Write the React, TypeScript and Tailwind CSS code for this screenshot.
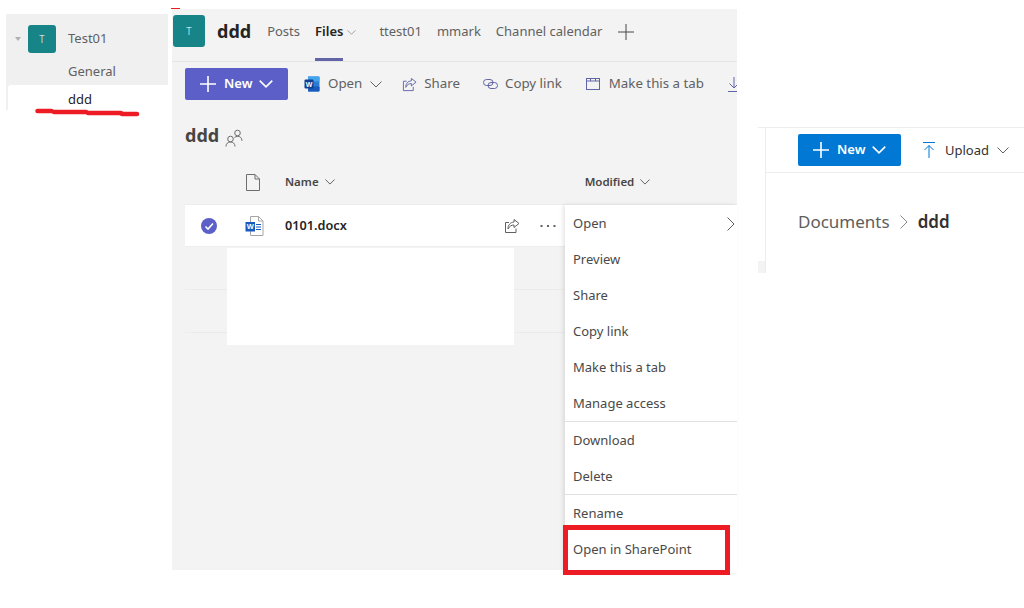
const ChevDown = ({ className, width = 1 }: { className?: string; width?: number }) => (
  <svg viewBox="0 0 12 7" fill="none" stroke="currentColor" strokeWidth={width} className={className}>
    <path d="M0.500 0.500l5.500 5.500 5.500-5.500" />
  </svg>
);

const ChevRight = ({ className }: { className?: string }) => (
  <svg viewBox="0 0 8 14" fill="none" stroke="currentColor" strokeWidth="1" className={className}>
    <path d="M0.500 0.500l6.500 6.500-6.500 6.500" />
  </svg>
);

const PlusMark = ({ className, width = 1 }: { className?: string; width?: number }) => (
  <svg viewBox="0 0 16 16" fill="none" stroke="currentColor" strokeWidth={width} className={className}>
    <path d="M8 0v16M0 8h16" />
  </svg>
);

const WordIcon = ({ className }: { className?: string }) => (
  <svg viewBox="0 0 16 16" className={className}>
    <path d="M4 0.5h10.5a1 1 0 0 1 1 1v13a1 1 0 0 1-1 1H4z" fill="#2b7cd3" />
    <rect x="4" y="0.5" width="11.5" height="5" fill="#41a5ee" rx="1" />
    <rect x="4" y="10.5" width="11.5" height="5" fill="#185abd" rx="1" />
    <rect x="0.5" y="3.5" width="9" height="9" rx="1" fill="#103f91" />
    <text x="5" y="10.8" textAnchor="middle" fontSize="7" fontWeight="700" fill="#fff" fontFamily="Liberation Sans, sans-serif">W</text>
  </svg>
);

const DocxIcon = () => (
  <svg viewBox="0 0 20 20" className="h-[20px] w-[20px]">
    <path d="M5.5 0.5h8l4.5 4.5v14.5h-12.5z" fill="#fff" stroke="#a6a6a6" />
    <path d="M13.5 0.5v4.5h4.5" fill="none" stroke="#a6a6a6" />
    <path d="M11 8.5h5M11 11h5M11 13.500h5" stroke="#185abd" strokeWidth="1.200" />
    <rect x="0.500" y="6" width="9.500" height="9.500" fill="#185abd" />
    <text x="5.200" y="13.400" textAnchor="middle" fontSize="7.500" fontWeight="700" fill="#fff" fontFamily="Liberation Sans, sans-serif">W</text>
  </svg>
);

const ShareIcon = ({ className, color = "#6264a7" }: { className?: string; color?: string }) => (
  <svg viewBox="0 0 16 16" fill="none" stroke={color} strokeWidth="1" className={className}>
    <path d="M5 4.500h-3.500v10h10.500v-4" />
    <path d="M10 1.500l5 4-5 4v-2.500c-2.500 0-4.500 1-6 4 0-4 2-6.500 6-7z" />
  </svg>
);

const LinkIcon = () => (
  <svg viewBox="0 0 15 12" fill="none" stroke="#6264a7" strokeWidth="1" className="h-[12px] w-[15px]">
    <rect x="0.500" y="1.500" width="9.500" height="6" rx="3" />
    <rect x="5" y="4.500" width="9.500" height="6" rx="3" />
  </svg>
);

const TabIcon = () => (
  <svg viewBox="0 0 14 12" fill="none" stroke="#6264a7" strokeWidth="1" className="h-[12px] w-[14px]">
    <rect x="0.500" y="0.500" width="13" height="11" />
    <path d="M0.500 3h13M4.500 0.500v2.500M9.500 0.500v2.500" />
  </svg>
);

const PeopleIcon = () => (
  <svg viewBox="0 0 18 18" fill="none" stroke="#6e6e6e" strokeWidth="1" className="h-[18px] w-[18px]">
    <circle cx="5.500" cy="10" r="2.800" />
    <path d="M1 17.500c0-3 2-4.500 4.500-4.500s4.500 1.500 4.500 4.500" />
    <circle cx="12.500" cy="4" r="2.800" />
    <path d="M9.500 8.500c1-.8 2-1.200 3-1.200 2.500 0 4.500 1.500 4.500 4.500" />
  </svg>
);

const PageIcon = () => (
  <svg viewBox="0 0 14 17" fill="none" stroke="#6e6e6e" strokeWidth="1" className="h-[17px] w-[14px]">
    <path d="M0.500 0.500h8.500l4.500 4.500v11.500h-13z" />
    <path d="M9 0.500v4.500h4.500" />
  </svg>
);

const UploadIcon = () => (
  <svg viewBox="0 0 12 16" fill="none" stroke="#0078d4" strokeWidth="1" className="h-[16px] w-[12px]">
    <path d="M0 0.500h12M6 16v-12.500M1.500 8l4.500-4.500 4.500 4.500" />
  </svg>
);

const DownloadIcon = () => (
  <svg viewBox="0 0 12 15" fill="none" stroke="#6264a7" strokeWidth="1" className="h-[15px] w-[12px]">
    <path d="M6 0v11M1.500 6.500l4.500 4.500 4.500-4.500M0 14.500h12" />
  </svg>
);

const Avatar = ({ size }: { size: string }) => (
  <div className={`flex shrink-0 items-center justify-center rounded-[3px] bg-[#178587] text-[10px] font-light text-white ${size}`}>T</div>
);

const menuGroups = [
  ["Open", "Preview", "Share", "Copy link", "Make this a tab", "Manage access"],
  ["Download", "Delete"],
  ["Rename", "Open in SharePoint"],
];

const ContextMenu = () => (
  <div className="absolute left-[393px] top-[196px] w-[172px] bg-white pb-[6px] text-[13px] text-[#494949] shadow-[-2px_0_4px_rgba(0,0,0,0.1)]">
    {menuGroups.map((group, i) => (
      <div key={i} className={i > 0 ? "border-t border-[#e1e1e1]" : ""}>
        {group.map((item) => (
          <div key={item} className="flex h-[36px] items-center justify-between pl-[8px] pr-[2px] pt-[2px]">
            {item}
            {item === "Open" && <ChevRight className="h-[14px] w-[8px] text-[#616161]" />}
          </div>
        ))}
      </div>
    ))}
  </div>
);

const NewButton = ({ color }: { color: string }) => (
  <button className={`flex h-[32px] w-[103px] shrink-0 items-center rounded-[2px] pl-[15px] text-[13px] font-semibold text-white ${color}`}>
    <PlusMark className="h-[16px] w-[16px]" width={1.6} />
    <span className="ml-[8px]">New</span>
    <ChevDown className="ml-[7px] h-[8px] w-[14px]" width={1.4} />
  </button>
);

export default function App() {
  return (
    <div className="relative flex h-[608px] w-[1024px] items-start overflow-hidden bg-white font-['Noto_Sans',sans-serif]">
      {/* left channel list */}
      <div className="ml-[6px] mt-[14px] h-[96px] w-[162px] bg-[#f0f0f0]">
        <div className="mt-[11px] flex h-[28px] items-center">
          <div className="ml-[9px] h-0 w-0 border-x-[3px] border-t-[4px] border-x-transparent border-t-[#b0b0b0]" />
          <Avatar size="ml-[7px] h-[28px] w-[28px]" />
          <span className="ml-[12px] text-[13px] text-[#616161]">Test01</span>
        </div>
        <div className="mt-[6px] flex h-[24px] items-center pl-[62px] pt-[2px] text-[13px] text-[#616161]">General</div>
        <div className="ml-[2px] mt-[2px] flex h-[25px] items-center rounded-tl-[3px] bg-white pl-[60px] pt-[5px] text-[13px] text-[#252423]">ddd</div>
      </div>

      {/* teams files panel */}
      <div className="relative ml-[4px] mt-[9px] h-[561px] w-[565px] bg-[#f3f3f3]">
        <div className="flex h-[53px] items-center border-b border-[#e5e5e5] pb-[8px] pl-[1px]">
          <Avatar size="h-[32px] w-[32px]" />
          <span className="ml-[12px] text-[18px] font-bold text-[#252423]">ddd</span>
          <div className="ml-[16px] flex h-full items-center pt-[2px] text-[13px] text-[#616161]">
            <span>Posts</span>
            <span className="relative ml-[15px] flex h-full items-center font-semibold text-[#252423]">
              Files
              <ChevDown className="ml-[4px] h-[5px] w-[9px] text-[#808080]" />
              <span className="absolute bottom-[-8px] left-0 h-[3px] w-[28px] bg-[#6264a7]" />
            </span>
            <span className="ml-[23px]">ttest01</span>
            <span className="ml-[15px]">mmark</span>
            <span className="ml-[15px]">Channel calendar</span>
            <PlusMark className="ml-[16px] h-[16px] w-[16px] text-[#484644]" width={1} />
          </div>
        </div>

        <div className="mt-[6px] flex items-center overflow-hidden whitespace-nowrap pl-[13px] text-[13.3px] text-[#616161]">
          <NewButton color="bg-[#5b5fc7]" />
          <WordIcon className="ml-[16px] h-[16px] w-[16px] shrink-0" />
          <span className="ml-[8px]">Open</span>
          <ChevDown className="ml-[8px] h-[7px] w-[12px] shrink-0" />
          <ShareIcon className="ml-[20px] h-[15px] w-[15px] shrink-0" />
          <span className="ml-[7px]">Share</span>
          <span className="ml-[23px] shrink-0"><LinkIcon /></span>
          <span className="ml-[7px]">Copy link</span>
          <span className="ml-[24px] shrink-0"><TabIcon /></span>
          <span className="ml-[9px]">Make this a tab</span>
          <span className="ml-[24px] shrink-0"><DownloadIcon /></span>
        </div>

        <div className="ml-[13px] mt-[22px] flex items-center">
          <span className="text-[18px] font-bold leading-[26px] text-[#484644]">ddd</span>
          <span className="ml-[6px] mt-[6px]"><PeopleIcon /></span>
        </div>

        <div className="mt-[19px] flex h-[30px] items-center text-[11.5px] font-semibold text-[#484644]">
          <span className="ml-[74px]"><PageIcon /></span>
          <span className="ml-[25px]">Name</span>
          <ChevDown className="ml-[6px] h-[6px] w-[10px]" />
          <span className="ml-[250px]">Modified</span>
          <ChevDown className="ml-[6px] h-[6px] w-[10px]" />
        </div>

        <div className="ml-[13px] mt-[7px] flex h-[43px] items-center border-y border-[#ededed] bg-white">
          <div className="ml-[16px] flex h-[16px] w-[16px] items-center justify-center rounded-full bg-[#5b5fc7]">
            <svg viewBox="0 0 10 10" fill="none" stroke="#fff" strokeWidth="1.600" className="h-[10px] w-[10px]">
              <path d="M1.500 5.500l2.500 2.500 5-5.500" />
            </svg>
          </div>
          <span className="ml-[28px]"><DocxIcon /></span>
          <span className="ml-[20px] text-[12.7px] font-semibold text-[#252423]">0101.docx</span>
          <ShareIcon className="ml-[157px] h-[16px] w-[16px]" color="#616161" />
          <svg viewBox="0 0 16 2" fill="#616161" className="ml-[20px] h-[2px] w-[16px]">
            <rect x="0.500" width="2" height="2" />
            <rect x="7" width="2" height="2" />
            <rect x="13.500" width="2" height="2" />
          </svg>
        </div>

        <div className="ml-[13px] mt-[42px] h-px bg-[#ebebeb]" />
        <div className="ml-[13px] mt-[42px] h-px bg-[#ebebeb]" />

        {/* blanked out patch */}
        <div className="absolute left-[55px] top-[239px] h-[97px] w-[287px] bg-white" />
        <ContextMenu />
      </div>

      {/* sharepoint panel */}
      <div className="ml-[21px] mt-[127px] h-[146px] w-[266px] shrink-0 border-t border-[#ededed]">
        <div className="flex h-full">
          <div className="flex w-[8px] items-end border-r border-[#ededed] bg-white">
            <div className="h-[12px] w-full bg-[#f3f3f3]" />
          </div>
          <div className="flex-1">
            <div className="flex h-[45px] items-center border-b border-[#ededed] pl-[32px]">
              <NewButton color="bg-[#0078d4]" />
              <span className="ml-[22px]"><UploadIcon /></span>
              <span className="ml-[10px] pt-[1px] text-[13px] text-[#323130]">Upload</span>
              <ChevDown className="ml-[8px] h-[7px] w-[12px] text-[#605e5c]" />
            </div>
            <div className="mt-[36px] flex items-center pl-[32px]">
              <span className="text-[17px] text-[#605e5c]">Documents</span>
              <ChevRight className="ml-[10px] h-[14px] w-[8px] text-[#8a8886]" />
              <span className="ml-[10px] text-[17px] font-semibold text-[#323130]">ddd</span>
            </div>
          </div>
        </div>
      </div>

      {/* red annotations */}
      <div className="absolute left-[171px] top-[8px] h-px w-[9px] bg-[#ed1c24]" />
      <svg className="absolute left-[34px] top-[107px]" width="108" height="11" fill="none" stroke="#ed1c24" strokeWidth="4.500" strokeLinecap="round">
        <path d="M3.500 4h14M20 5h32M54 6h33M88 7h15" />
      </svg>
      <div className="absolute left-[563px] top-[525px] h-[50px] w-[167px] border-[5px] border-[#ed1c24]" />
    </div>
  );
}
